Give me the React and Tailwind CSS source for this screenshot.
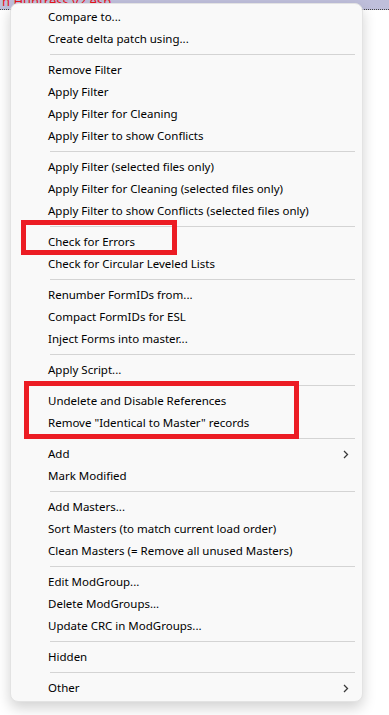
import React from 'react';

const groups = [
  ['Compare to...', 'Create delta patch using...'],
  ['Remove Filter', 'Apply Filter', 'Apply Filter for Cleaning', 'Apply Filter to show Conflicts'],
  ['Apply Filter (selected files only)', 'Apply Filter for Cleaning (selected files only)', 'Apply Filter to show Conflicts (selected files only)'],
  ['Check for Errors', 'Check for Circular Leveled Lists'],
  ['Renumber FormIDs from...', 'Compact FormIDs for ESL', 'Inject Forms into master...'],
  ['Apply Script...'],
  ['Undelete and Disable References', 'Remove "Identical to Master" records'],
  ['Add>', 'Mark Modified'],
  ['Add Masters...', 'Sort Masters (to match current load order)', 'Clean Masters (= Remove all unused Masters)'],
  ['Edit ModGroup...', 'Delete ModGroups...', 'Update CRC in ModGroups...'],
  ['Hidden'],
  ['Other>'],
];

const Chevron = () => (
  <svg width="6" height="9" viewBox="0 0 6 9" className="mr-[13px]">
    <path d="M1 1 L4.5 4.5 L1 8" fill="none" stroke="#3a3a3a" strokeWidth="1.3" />
  </svg>
);

const Row = ({ label }) => {
  const sub = label.endsWith('>');
  const text = sub ? label.slice(0, -1) : label;
  return (
    <div className="h-[22px] flex items-center justify-between pl-[37px] text-[11.5px] text-black whitespace-nowrap">
      <span>{text}</span>
      {sub && <Chevron />}
    </div>
  );
};

const Separator = () => (
  <div className="h-[9px] flex items-center ml-[39px] mr-[7px]">
    <div className="h-px w-full bg-[#d4d4d4]" />
  </div>
);

const App = () => {
  return (
    <div className="relative w-[389px] h-[715px] bg-white overflow-hidden" style={{ fontFamily: '"Noto Sans", "Open Sans", sans-serif' }}>
      {/* Window strip behind the menu */}
      <div className="h-[10px] bg-[#bfbfdb] border-b border-dotted border-[#444] overflow-hidden">
        <div className="pl-[2px] -mt-[7px] text-[13px] leading-[16px] text-[#e8141b]">n Huntress v2.esp</div>
      </div>

      {/* Context menu */}
      <div className="absolute left-[10px] top-[3px] w-[353px] bg-[#f9f9f9] border border-[#e3e3e3] rounded-[8px] shadow-[0_6px_14px_rgba(0,0,0,0.18)] pt-[2px] pb-[2px]">
        {groups.map((items, gi) => (
          <div key={gi}>
            {gi > 0 && <Separator />}
            {items.map((label) => (
              <Row key={label} label={label} />
            ))}
          </div>
        ))}
      </div>

      {/* Highlight boxes */}
      <div className="absolute left-[21px] top-[220px] w-[156px] h-[35px] border-[5px] border-[#ec1c24]" />
      <div className="absolute left-[24px] top-[381px] w-[275px] h-[58px] border-[5px] border-[#ec1c24]" />
    </div>
  );
};

export default App;
